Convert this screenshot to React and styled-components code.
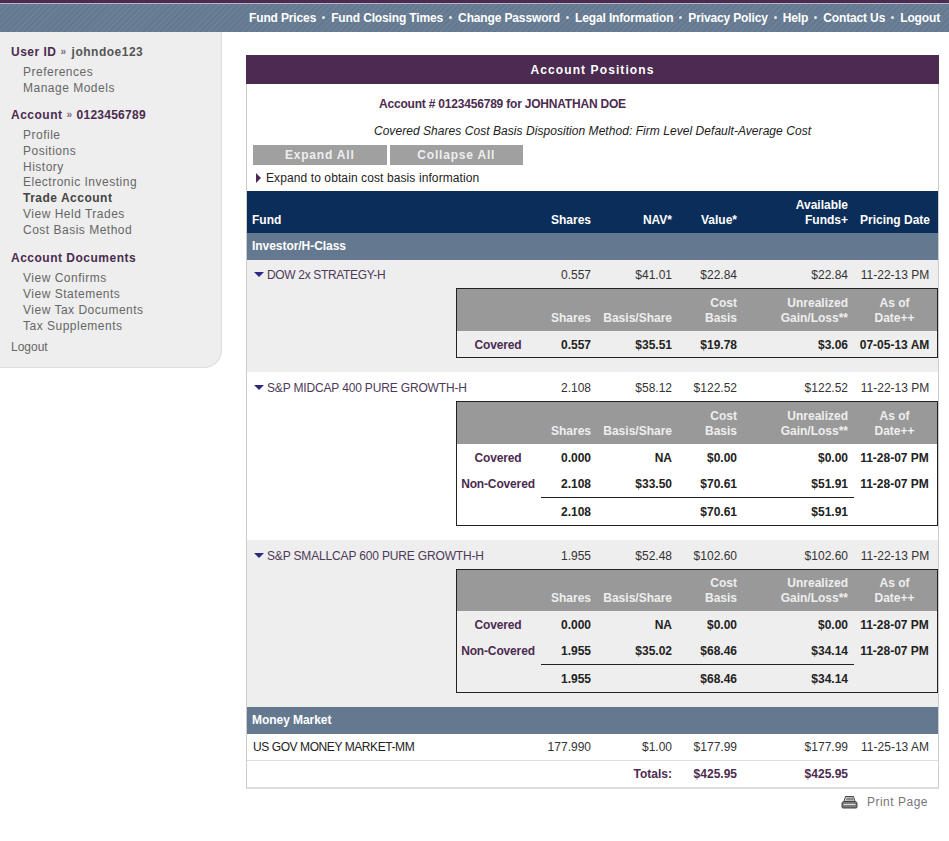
import React from "react";
import styled, { createGlobalStyle } from "styled-components";

const Global = createGlobalStyle`
  html, body { margin: 0; padding: 0; background: #fff; }
  body { font-family: "Liberation Sans", Arial, sans-serif; font-size: 12px; color: #333; }
`;

const COLS = "50px 81px 65px 111px 1fr";

const Page = styled.div`
  width: 949px;
  height: 841px;
  overflow: hidden;
`;

const TopStrip = styled.div`
  height: 3px;
  background: #4b2b50;
  border-bottom: 1px solid #b9b4c0;
`;

const NavBar = styled.nav`
  height: 27px;
  padding: 0 9px 1px 0;
  display: flex;
  align-items: center;
  justify-content: flex-end;
  color: #fff;
  font-weight: bold;
  letter-spacing: -0.14px;
  background: repeating-linear-gradient(135deg, #64798f 0 2px, #6b8096 2px 4px);
`;

const NavLink = styled.a`
  white-space: nowrap;
`;

const NavDot = styled.span`
  width: 3px;
  height: 3px;
  margin: 0 6px;
  background: #e8e8e8;
  border-radius: 50%;
`;

const Body = styled.div`
  display: flex;
  align-items: flex-start;
`;

const Side = styled.aside`
  width: 222px;
  height: 336px;
  flex: none;
  box-sizing: border-box;
  padding: 12px 0 0 11px;
  background: #eee;
  border-right: 1px solid #ddd;
  border-bottom: 1px solid #ddd;
  border-bottom-right-radius: 18px;
`;

const SideHead = styled.div`
  font-weight: bold;
  color: #4b2b50;
  letter-spacing: 0.5px;
  line-height: 16px;
  margin-bottom: 5px;
  white-space: nowrap;

  & > b {
    color: ${(p) => (p.$grey ? "#555" : "#4b2b50")};
    letter-spacing: ${(p) => (p.$grey ? "0.5px" : "0.25px")};
  }
`;

const Chevron = styled.span`
  margin: ${(p) => (p.$wide ? "0 5px 0 4px" : "0 4px")};
  font-size: 10px;
  vertical-align: 1px;
  color: #7a6a80;
`;

const SideList = styled.div`
  display: flex;
  flex-direction: column;
  padding-left: 12px;
  margin-bottom: ${(p) => p.$gap}px;
`;

const SideLink = styled.a`
  line-height: 15.87px;
  color: #666;
  letter-spacing: 0.5px;
  font-weight: ${(p) => (p.$strong ? "bold" : "normal")};
  ${(p) => p.$strong && "color: #444;"}
`;

const Logout = styled.a`
  display: block;
  margin-top: -1px;
  line-height: 16px;
  color: #666;
`;

const Main = styled.main`
  width: 693px;
  margin: 23px 0 0 24px;
  flex: none;
`;

const Panel = styled.section`
  border: 1px solid #ccc;
  border-top: 0;
  border-bottom: 2px solid #ddd;
  box-sizing: border-box;
`;

const PanelTitle = styled.h1`
  margin: 0 -1px;
  height: 29px;
  line-height: 31px;
  background: #4b2b50;
  color: #fff;
  font-size: 12px;
  font-weight: bold;
  letter-spacing: 1.1px;
  text-align: center;
`;

const AccountLine = styled.div`
  margin-top: 13px;
  padding-left: 132px;
  line-height: 14px;
  font-weight: bold;
  letter-spacing: -0.2px;
  color: #4b2b50;
`;

const MethodLine = styled.div`
  margin-top: 13px;
  line-height: 14px;
  font-style: italic;
  letter-spacing: 0.05px;
  text-align: center;
  color: #222;
`;

const ButtonRow = styled.div`
  display: flex;
  gap: 3px;
  margin: 7px 0 0 6px;
`;

const GreyButton = styled.button`
  width: 133.5px;
  height: 20px;
  padding: 0;
  border: 0;
  background: #a0a0a0;
  color: #eee;
  font: bold 12px "Liberation Sans", Arial, sans-serif;
  letter-spacing: 0.8px;
`;

const Hint = styled.div`
  display: flex;
  align-items: center;
  gap: 5px;
  height: 16px;
  margin: 5px 0 5px 9px;
  letter-spacing: 0.1px;
  color: #222;
`;

const RightArrow = styled.i`
  width: 0;
  height: 0;
  border-left: 5px solid #4b2b50;
  border-top: 5px solid transparent;
  border-bottom: 5px solid transparent;
`;

const DownArrow = styled.i`
  width: 0;
  height: 0;
  margin-right: 3px;
  border-top: 5px solid #2b2a85;
  border-left: 5px solid transparent;
  border-right: 5px solid transparent;
`;

const HeadRow = styled.div`
  height: 42px;
  display: grid;
  grid-template-columns: 294px ${COLS};
  align-items: end;
  padding-bottom: 5px;
  box-sizing: border-box;
  background: #0b2d5a;
  color: #fff;
  font-weight: bold;
  line-height: 15px;
`;

const Cell = styled.div`
  text-align: ${(p) => p.$align || "right"};
  ${(p) => p.$align === "center" && "padding-left: 4px;"}
`;

const FundHead = styled.div`
  padding-left: 5px;
`;

const ClassRow = styled.div`
  height: 27px;
  line-height: 26px;
  padding-left: 5px;
  background: #64798f;
  color: #fff;
  font-weight: bold;
  letter-spacing: -0.05px;
`;

const Group = styled.div`
  background: ${(p) => (p.$shade ? "#eee" : "#fff")};
  padding-bottom: 14px;
`;

const FundRow = styled.div`
  height: ${(p) => p.$h || 28}px;
  padding-top: ${(p) => p.$pad || 0}px;
  box-sizing: border-box;
  display: grid;
  grid-template-columns: 294px ${COLS};
  align-items: center;
  color: #333;
`;

const PlainRow = styled(FundRow)`
  height: 27px;
  border-bottom: 1px solid #ddd;
`;

const FundName = styled.div`
  display: flex;
  align-items: center;
  padding-left: ${(p) => (p.$plain ? "6px" : "7px")};
  color: ${(p) => (p.$plain ? "#222" : "#4d3a58")};
  letter-spacing: ${(p) => p.$track}px;
  white-space: nowrap;
`;

const Sub = styled.div`
  margin-left: 209px;
  border: 1px solid #222;
`;

const SubHead = styled.div`
  height: ${(p) => (p.$short ? 41 : 42)}px;
  display: grid;
  grid-template-columns: 84px ${COLS};
  align-items: end;
  padding-bottom: 5px;
  box-sizing: border-box;
  background: #999;
  color: #eee;
  font-weight: bold;
  line-height: 15px;
`;

const SubRow = styled.div`
  height: ${(p) => p.$h || 26}px;
  padding-top: 1px;
  box-sizing: border-box;
  display: grid;
  grid-template-columns: 84px ${COLS};
  align-items: center;
  color: #222;
  font-weight: bold;
`;

const SubLabel = styled.div`
  padding-right: 2px;
  text-align: center;
  letter-spacing: -0.15px;
  color: #4b2b50;
`;

const SubRule = styled.div`
  height: 1px;
  margin-left: 84px;
  width: 313px;
  background: #222;
`;

const TotalsRow = styled(FundRow)`
  height: 26px;
  font-weight: bold;
  color: #4b2b50;
`;

const PrintRow = styled.div`
  display: flex;
  align-items: center;
  justify-content: flex-end;
  gap: 9px;
  margin-top: 6px;
  padding-right: 11px;
  color: #777;
  letter-spacing: 0.5px;
`;

const Printer = () => (
  <svg width="17" height="14" viewBox="0 0 17 14">
    <path d="M4.5 1.5h8l1.5 5H3z" fill="#ddd" stroke="#444" />
    <path d="M5.5 3.2h6.5M5 4.8h7.5" stroke="#666" />
    <path d="M1 7.5 3 6.5h11l2 1V12a1 1 0 0 1-1 1H2a1 1 0 0 1-1-1z" fill="#777" stroke="#444" />
    <path d="M2.5 9.5h12" stroke="#ddd" strokeWidth="1.2" />
  </svg>
);

const navItems = ["Fund Prices", "Fund Closing Times", "Change Password", "Legal Information", "Privacy Policy", "Help", "Contact Us", "Logout"];

const SubHeader = ({ short }) => (
  <SubHead $short={short}>
    <div />
    <Cell>Shares</Cell>
    <Cell>Basis/Share</Cell>
    <Cell>Cost<br />Basis</Cell>
    <Cell>Unrealized<br />Gain/Loss**</Cell>
    <Cell $align="center">As of<br />Date++</Cell>
  </SubHead>
);

const Lot = ({ label, shares, basis, cost, gain, date, h }) => (
  <SubRow $h={h}>
    <SubLabel>{label}</SubLabel>
    <Cell>{shares}</Cell>
    <Cell>{basis}</Cell>
    <Cell>{cost}</Cell>
    <Cell>{gain}</Cell>
    <Cell $align="center">{date}</Cell>
  </SubRow>
);

const Fund = ({ name, shares, nav, value, date, h, pad, track = -0.16 }) => (
  <FundRow $h={h} $pad={pad}>
    <FundName $track={track}>
      <DownArrow />
      {name}
    </FundName>
    <Cell>{shares}</Cell>
    <Cell>{nav}</Cell>
    <Cell>{value}</Cell>
    <Cell>{value}</Cell>
    <Cell $align="center">{date}</Cell>
  </FundRow>
);

const App = () => (
  <Page>
    <Global />
    <TopStrip />
    <NavBar>
      {navItems.map((n, i) => (
        <React.Fragment key={n}>
          {i > 0 && <NavDot />}
          <NavLink>{n}</NavLink>
        </React.Fragment>
      ))}
    </NavBar>
    <Body>
      <Side>
        <SideHead $grey>User ID<Chevron $wide>»</Chevron><b>johndoe123</b></SideHead>
        <SideList $gap={10}>
          <SideLink>Preferences</SideLink>
          <SideLink>Manage Models</SideLink>
        </SideList>
        <SideHead>Account<Chevron>»</Chevron><b>0123456789</b></SideHead>
        <SideList $gap={11}>
          <SideLink>Profile</SideLink>
          <SideLink>Positions</SideLink>
          <SideLink>History</SideLink>
          <SideLink>Electronic Investing</SideLink>
          <SideLink $strong>Trade Account</SideLink>
          <SideLink>View Held Trades</SideLink>
          <SideLink>Cost Basis Method</SideLink>
        </SideList>
        <SideHead>Account Documents</SideHead>
        <SideList $gap={6}>
          <SideLink>View Confirms</SideLink>
          <SideLink>View Statements</SideLink>
          <SideLink>View Tax Documents</SideLink>
          <SideLink>Tax Supplements</SideLink>
        </SideList>
        <Logout>Logout</Logout>
      </Side>
      <Main>
        <Panel>
          <PanelTitle>Account Positions</PanelTitle>
          <AccountLine>Account # 0123456789 for JOHNATHAN DOE</AccountLine>
          <MethodLine>Covered Shares Cost Basis Disposition Method: Firm Level Default-Average Cost</MethodLine>
          <ButtonRow>
            <GreyButton>Expand All</GreyButton>
            <GreyButton>Collapse All</GreyButton>
          </ButtonRow>
          <Hint><RightArrow />Expand to obtain cost basis information</Hint>
          <HeadRow>
            <FundHead>Fund</FundHead>
            <Cell>Shares</Cell>
            <Cell>NAV*</Cell>
            <Cell>Value*</Cell>
            <Cell>Available<br />Funds+</Cell>
            <Cell $align="center">Pricing Date</Cell>
          </HeadRow>
          <ClassRow>Investor/H-Class</ClassRow>
          <Group $shade>
            <Fund name="DOW 2x STRATEGY-H" shares="0.557" nav="$41.01" value="$22.84" date="11-22-13 PM" pad={1} track={-0.34} />
            <Sub>
              <SubHeader />
              <Lot label="Covered" shares="0.557" basis="$35.51" cost="$19.78" gain="$3.06" date="07-05-13 AM" />
            </Sub>
          </Group>
          <Group>
            <Fund name="S&P MIDCAP 400 PURE GROWTH-H" shares="2.108" nav="$58.12" value="$122.52" date="11-22-13 PM" h={29} pad={2} />
            <Sub>
              <SubHeader />
              <Lot label="Covered" shares="0.000" basis="NA" cost="$0.00" gain="$0.00" date="11-28-07 PM" />
              <Lot label="Non-Covered" shares="2.108" basis="$33.50" cost="$70.61" gain="$51.91" date="11-28-07 PM" h={27} />
              <SubRule />
              <Lot shares="2.108" cost="$70.61" gain="$51.91" h={27} />
            </Sub>
          </Group>
          <Group $shade>
            <Fund name="S&P SMALLCAP 600 PURE GROWTH-H" shares="1.955" nav="$52.48" value="$102.60" date="11-22-13 PM" h={29} pad={2} />
            <Sub>
              <SubHeader short />
              <Lot label="Covered" shares="0.000" basis="NA" cost="$0.00" gain="$0.00" date="11-28-07 PM" />
              <Lot label="Non-Covered" shares="1.955" basis="$35.02" cost="$68.46" gain="$34.14" date="11-28-07 PM" h={27} />
              <SubRule />
              <Lot shares="1.955" cost="$68.46" gain="$34.14" h={27} />
            </Sub>
          </Group>
          <ClassRow>Money Market</ClassRow>
          <PlainRow>
            <FundName $plain $track={-0.42}>US GOV MONEY MARKET-MM</FundName>
            <Cell>177.990</Cell>
            <Cell>$1.00</Cell>
            <Cell>$177.99</Cell>
            <Cell>$177.99</Cell>
            <Cell $align="center">11-25-13 AM</Cell>
          </PlainRow>
          <TotalsRow $h={26}>
            <div />
            <div />
            <Cell>Totals:</Cell>
            <Cell>$425.95</Cell>
            <Cell>$425.95</Cell>
            <div />
          </TotalsRow>
        </Panel>
        <PrintRow><Printer />Print Page</PrintRow>
      </Main>
    </Body>
  </Page>
);

export default App;
